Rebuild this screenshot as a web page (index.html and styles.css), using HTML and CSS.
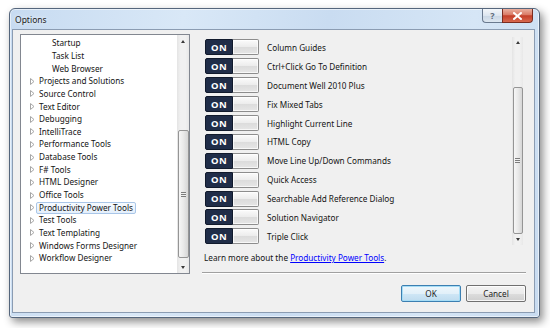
FILE: index.html
```html
<!DOCTYPE html>
<html lang="en">
<head>
    <meta charset="UTF-8">
    <meta name="viewport" content="width=device-width, initial-scale=1.0">
    <title>Options</title>
    <link rel="stylesheet" href="styles.css">
</head>
<body>
    <div class="window">
        <div class="titlebar">
            <span class="title">Options</span>
            <div class="caption-btns">
                <div class="cap help">?</div>
                <div class="cap close">
                    <svg width="9" height="8" viewBox="0 0 9 8"><path d="M1 1 L8 7 M8 1 L1 7" stroke="#fff" stroke-width="2" stroke-linecap="square"/></svg>
                </div>
            </div>
        </div>

        <div class="client">
            <div class="main">
                <div class="tree">
                    <ul class="tree-items">
                        <li class="node child"><span class="text">Startup</span></li>
                        <li class="node child"><span class="text">Task List</span></li>
                        <li class="node child"><span class="text">Web Browser</span></li>
                        <li class="node"><svg class="exp" width="7" height="7" viewBox="0 0 7 7"><path d="M1.5 0.5 L5 3.5 L1.5 6.5 Z"/></svg><span class="text">Projects and Solutions</span></li>
                        <li class="node"><svg class="exp" width="7" height="7" viewBox="0 0 7 7"><path d="M1.5 0.5 L5 3.5 L1.5 6.5 Z"/></svg><span class="text">Source Control</span></li>
                        <li class="node"><svg class="exp" width="7" height="7" viewBox="0 0 7 7"><path d="M1.5 0.5 L5 3.5 L1.5 6.5 Z"/></svg><span class="text">Text Editor</span></li>
                        <li class="node"><svg class="exp" width="7" height="7" viewBox="0 0 7 7"><path d="M1.5 0.5 L5 3.5 L1.5 6.5 Z"/></svg><span class="text">Debugging</span></li>
                        <li class="node"><svg class="exp" width="7" height="7" viewBox="0 0 7 7"><path d="M1.5 0.5 L5 3.5 L1.5 6.5 Z"/></svg><span class="text">IntelliTrace</span></li>
                        <li class="node"><svg class="exp" width="7" height="7" viewBox="0 0 7 7"><path d="M1.5 0.5 L5 3.5 L1.5 6.5 Z"/></svg><span class="text">Performance Tools</span></li>
                        <li class="node"><svg class="exp" width="7" height="7" viewBox="0 0 7 7"><path d="M1.5 0.5 L5 3.5 L1.5 6.5 Z"/></svg><span class="text">Database Tools</span></li>
                        <li class="node"><svg class="exp" width="7" height="7" viewBox="0 0 7 7"><path d="M1.5 0.5 L5 3.5 L1.5 6.5 Z"/></svg><span class="text">F# Tools</span></li>
                        <li class="node"><svg class="exp" width="7" height="7" viewBox="0 0 7 7"><path d="M1.5 0.5 L5 3.5 L1.5 6.5 Z"/></svg><span class="text">HTML Designer</span></li>
                        <li class="node"><svg class="exp" width="7" height="7" viewBox="0 0 7 7"><path d="M1.5 0.5 L5 3.5 L1.5 6.5 Z"/></svg><span class="text">Office Tools</span></li>
                        <li class="node selected"><svg class="exp" width="7" height="7" viewBox="0 0 7 7"><path d="M1.5 0.5 L5 3.5 L1.5 6.5 Z"/></svg><span class="text">Productivity Power Tools</span></li>
                        <li class="node"><svg class="exp" width="7" height="7" viewBox="0 0 7 7"><path d="M1.5 0.5 L5 3.5 L1.5 6.5 Z"/></svg><span class="text">Test Tools</span></li>
                        <li class="node"><svg class="exp" width="7" height="7" viewBox="0 0 7 7"><path d="M1.5 0.5 L5 3.5 L1.5 6.5 Z"/></svg><span class="text">Text Templating</span></li>
                        <li class="node"><svg class="exp" width="7" height="7" viewBox="0 0 7 7"><path d="M1.5 0.5 L5 3.5 L1.5 6.5 Z"/></svg><span class="text">Windows Forms Designer</span></li>
                        <li class="node"><svg class="exp" width="7" height="7" viewBox="0 0 7 7"><path d="M1.5 0.5 L5 3.5 L1.5 6.5 Z"/></svg><span class="text">Workflow Designer</span></li>
                    </ul>
                    <div class="vscroll tree-scroll">
                        <div class="arrow"><span class="tri up"></span></div>
                        <div class="track"><div class="thumb"><span class="grip"></span></div></div>
                        <div class="arrow"><span class="tri down"></span></div>
                    </div>
                </div>

                <div class="pane">
                    <div class="features">
                        <ul class="feature-list">
                            <li class="feature"><span class="toggle"><span class="on">ON</span><span class="knob"></span></span><span class="label">Column Guides</span></li>
                            <li class="feature"><span class="toggle"><span class="on">ON</span><span class="knob"></span></span><span class="label">Ctrl+Click Go To Definition</span></li>
                            <li class="feature"><span class="toggle"><span class="on">ON</span><span class="knob"></span></span><span class="label">Document Well 2010 Plus</span></li>
                            <li class="feature"><span class="toggle"><span class="on">ON</span><span class="knob"></span></span><span class="label">Fix Mixed Tabs</span></li>
                            <li class="feature"><span class="toggle"><span class="on">ON</span><span class="knob"></span></span><span class="label">Highlight Current Line</span></li>
                            <li class="feature"><span class="toggle"><span class="on">ON</span><span class="knob"></span></span><span class="label">HTML Copy</span></li>
                            <li class="feature"><span class="toggle"><span class="on">ON</span><span class="knob"></span></span><span class="label">Move Line Up/Down Commands</span></li>
                            <li class="feature"><span class="toggle"><span class="on">ON</span><span class="knob"></span></span><span class="label">Quick Access</span></li>
                            <li class="feature"><span class="toggle"><span class="on">ON</span><span class="knob"></span></span><span class="label">Searchable Add Reference Dialog</span></li>
                            <li class="feature"><span class="toggle"><span class="on">ON</span><span class="knob"></span></span><span class="label">Solution Navigator</span></li>
                            <li class="feature"><span class="toggle"><span class="on">ON</span><span class="knob"></span></span><span class="label">Triple Click</span></li>
                        </ul>
                        <div class="vscroll pane-scroll">
                            <div class="arrow"><span class="tri up"></span></div>
                            <div class="track"><div class="thumb"><span class="grip"></span></div></div>
                            <div class="arrow"><span class="tri down"></span></div>
                        </div>
                    </div>
                    <p class="learn">Learn more about the <a href="#">Productivity Power Tools</a>.</p>
                    <div class="sep"></div>
                </div>
            </div>

            <div class="buttons">
                <button class="btn default">OK</button>
                <button class="btn">Cancel</button>
            </div>
        </div>
    </div>
</body>
</html>
```

FILE: styles.css
```css
* {
    box-sizing: border-box;
}
body {
    margin: 0;
    width: 550px;
    height: 328px;
    overflow: hidden;
    background-color: #fff;
    font-family: "Noto Sans", "Open Sans", sans-serif;
    color: #141414;
}

/* window frame */
.window {
    margin: 8px 0 0 9px;
    width: 531px;
    height: 310px;
    display: flex;
    flex-direction: column;
    border: 1px solid #55667c;
    border-radius: 6px 6px 3px 3px;
    background: linear-gradient(100deg, #c7dbf1 0%, #d9e8f7 30%, #c9dcf1 55%, #d6e6f6 80%, #c8dbf0 100%);
    box-shadow: 3px 4px 8px rgba(0, 0, 0, 0.45), inset 0 0 0 1px rgba(255, 255, 255, 0.55);
}
.titlebar {
    height: 20px;
    display: flex;
    align-items: center;
    padding-left: 5px;
}
.title {
    font-size: 8.5px;
    color: #1b1b1b;
    text-shadow: 0 0 4px #fff;
}
.caption-btns {
    margin-left: auto;
    margin-right: 6px;
    align-self: flex-start;
    display: flex;
}
.cap {
    height: 14px;
    display: flex;
    align-items: center;
    justify-content: center;
    border: 1px solid #6a7a8f;
    border-top: none;
}
.help {
    width: 20px;
    border-right: none;
    border-radius: 0 0 0 4px;
    background: linear-gradient(#f3f6fa, #dde6f0 50%, #c9d6e4 51%, #dde7f1);
    color: #5e6a7a;
    font-size: 9px;
    font-weight: bold;
}
.close {
    width: 31px;
    border-color: #7b2c20;
    border-radius: 0 0 4px 0;
    background: linear-gradient(#eab0a0, #da7a65 45%, #c43e28 52%, #d8694f);
}

/* client area */
.client {
    flex: 1;
    margin: 0 4px 4px 2px;
    padding: 4px 8px 10px 7px;
    background-color: #f0f0f0;
    border: 1px solid #8b9cb2;
    display: flex;
    flex-direction: column;
}
.main {
    display: grid;
    grid-template-columns: 170px 1fr;
    column-gap: 10px;
    height: 240px;
}

/* tree */
.tree {
    display: flex;
    background-color: #fff;
    border: 1px solid #828790;
}
.tree-items {
    flex: 1;
    list-style: none;
    margin: 0;
    padding: 2px 0 0;
    font-size: 8.2px;
}
.node {
    height: 12.65px;
    display: flex;
    align-items: center;
    padding-left: 8px;
}
.node.child {
    padding-left: 28px;
}
.exp {
    flex: none;
    fill: #fff;
    stroke: #a6a6a6;
    stroke-width: 1;
}
.text {
    display: inline-block;
    line-height: 10px;
    padding: 0 2px;
    border: 1px solid transparent;
    border-radius: 2px;
    white-space: nowrap;
}
.selected .text {
    border-color: #a9c6e8;
    background: linear-gradient(#f7fbff, #e4effb);
}

/* scrollbars */
.vscroll {
    display: flex;
    flex-direction: column;
    background: linear-gradient(90deg, #e4e4e4, #f1f1f1 30%, #f1f1f1 70%, #e8e8e8);
}
.tree-scroll {
    width: 12px;
}
.pane-scroll {
    width: 11px;
}
.arrow {
    height: 12px;
    display: flex;
    align-items: center;
    justify-content: center;
}
.tri {
    border-style: solid;
    border-color: transparent;
}
.tri.up {
    border-width: 0 2.5px 3px;
    border-bottom-color: #3a3a3a;
}
.tri.down {
    border-width: 3px 2.5px 0;
    border-top-color: #3a3a3a;
}
.track {
    flex: 1;
}
.thumb {
    margin: 0 0.5px;
    display: flex;
    align-items: center;
    justify-content: center;
    border: 1px solid #959595;
    border-radius: 2px;
    background: linear-gradient(90deg, #f6f6f6, #e9e9e9 50%, #d6d6d6);
}
.tree-scroll .thumb {
    margin-top: 83px;
    height: 128px;
}
.pane-scroll .arrow {
    height: 11px;
}
.pane-scroll .thumb {
    margin-top: 39px;
    height: 147px;
}
.grip {
    width: 5px;
    height: 5px;
    border-top: 1px solid #7c7c7c;
    border-bottom: 1px solid #7c7c7c;
    background: linear-gradient(#f0f0f0 40%, #7c7c7c 40%, #7c7c7c 60%, #f0f0f0 60%);
}

/* right pane */
.pane {
    display: flex;
    flex-direction: column;
    padding-top: 3px;
}
.features {
    height: 208px;
    display: flex;
    margin-right: 3px;
}
.feature-list {
    flex: 1;
    list-style: none;
    margin: 0;
    padding: 1px 0 0 5px;
}
.feature {
    height: 18.9px;
    display: flex;
    align-items: center;
    gap: 8px;
}
.toggle {
    width: 54px;
    height: 16px;
    display: flex;
}
.on {
    width: 28px;
    display: flex;
    align-items: center;
    justify-content: center;
    background-color: #202d48;
    border: 1px solid #111a2c;
    border-radius: 2px 0 0 2px;
    color: #fff;
    font-size: 9.5px;
    font-weight: bold;
    letter-spacing: 0.3px;
}
.knob {
    flex: 1;
    border: 1px solid #8d8d8d;
    border-left: none;
    border-radius: 0 2px 2px 0;
    background: linear-gradient(#fbfbfb, #ececec 50%, #dcdcdc 52%, #e6e6e6);
    box-shadow: inset 0 0 0 1px rgba(255, 255, 255, 0.7);
}
.label {
    font-size: 8.2px;
    white-space: nowrap;
}
.learn {
    margin: 7px 0 0 4px;
    font-size: 8.2px;
    line-height: 12px;
}
.learn a {
    color: #0000ff;
}
.sep {
    margin: auto 0 0 2px;
    border-top: 1px solid #a0a0a0;
    border-bottom: 1px solid #fff;
}

/* dialog buttons */
.buttons {
    margin-top: 11px;
    display: flex;
    justify-content: flex-end;
    gap: 5px;
}
.btn {
    width: 60px;
    height: 17px;
    padding: 0;
    font-family: inherit;
    font-size: 8.2px;
    color: #1e1e1e;
    border: 1px solid #707070;
    border-radius: 2px;
    background: linear-gradient(#f3f3f3, #ebebeb 50%, #dddddd 51%, #cfcfcf);
    box-shadow: inset 0 0 0 1px rgba(255, 255, 255, 0.8);
}
.btn.default {
    border-color: #3c7fb1;
    background: linear-gradient(#eef7fc, #e2f0f9 50%, #cfe7f6 51%, #bfdcef);
    box-shadow: inset 0 0 0 1px #a6ddf6;
}
```
